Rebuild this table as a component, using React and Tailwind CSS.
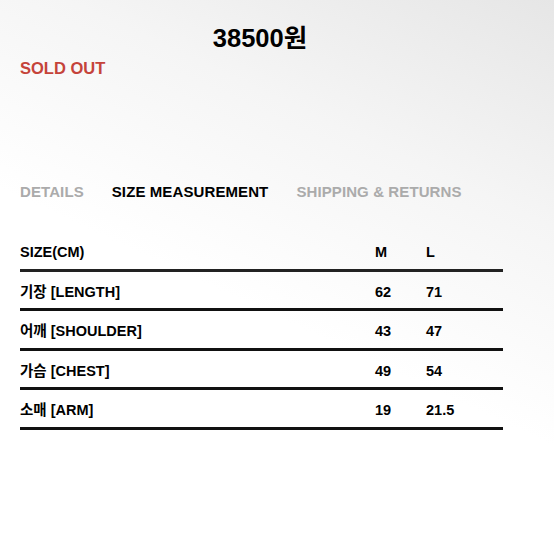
import React from 'react';

const rows = [
    { label: '기장 [LENGTH]', m: '62', l: '71' },
    { label: '어깨 [SHOULDER]', m: '43', l: '47' },
    { label: '가슴 [CHEST]', m: '49', l: '54' },
    { label: '소매 [ARM]', m: '19', l: '21.5' }
];

const tabs = [
    { name: 'DETAILS', active: false },
    { name: 'SIZE MEASUREMENT', active: true },
    { name: 'SHIPPING & RETURNS', active: false }
];

export default function App() {
    return (
        <div
            className="w-[554px] h-[554px] overflow-hidden bg-[linear-gradient(205deg,#e6e6e6_0%,#f5f5f5_28%,#ffffff_55%)] text-black"
            style={{ fontFamily: '"Liberation Sans", "Noto Sans CJK KR", sans-serif' }}
        >
            {/* price + status */}
            <div className="pt-[22px] pr-[34px] text-center text-[25.5px] leading-[32px] font-bold">38500원</div>
            <div className="pl-[20px] mt-[2px] text-[16.5px] leading-[24px] font-bold text-[#c5433a]">SOLD OUT</div>

            {/* tabs */}
            <div className="flex pl-[20px] mt-[100px] text-[15px] leading-[24px] font-bold tracking-[0.1px]">
                {tabs.map((t) => (
                    <div key={t.name} className={`mr-[28px] ${t.active ? 'text-black' : 'text-[#ababab]'}`}>
                        {t.name}
                    </div>
                ))}
            </div>

            {/* size table */}
            <div className="ml-[20px] w-[483px] mt-[33px] text-[14.5px] font-bold">
                <div className="flex items-center h-[35px] border-b-[3px] border-[#222]">
                    <div className="w-[355px]">SIZE(CM)</div>
                    <div className="w-[51px]">M</div>
                    <div>L</div>
                </div>
                {rows.map((r) => (
                    <div key={r.label} className="flex items-center h-[39.4px] pt-[5px] border-b-[3px] border-[#111]">
                        <div className="w-[355px]">{r.label}</div>
                        <div className="w-[51px]">{r.m}</div>
                        <div>{r.l}</div>
                    </div>
                ))}
            </div>
        </div>
    );
}
